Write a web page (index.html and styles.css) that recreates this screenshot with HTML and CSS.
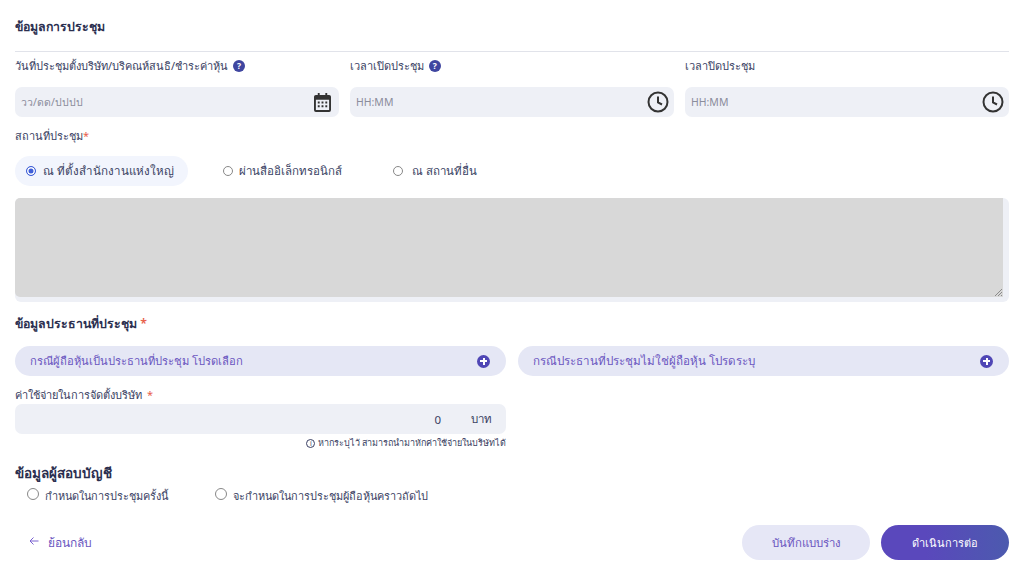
FILE: index.html
```html
<!DOCTYPE html>
<html lang="th">
<head>
<meta charset="utf-8">
<title>ข้อมูลการประชุม</title>
<link rel="stylesheet" href="styles.css">
</head>
<body>
<main class="page">
  <h2 class="title">ข้อมูลการประชุม</h2>
  <div class="rule"></div>
  <div class="three">
    <div class="field">
      <div class="label">วันที่ประชุมตั้งบริษัท/บริคณห์สนธิ/ชำระค่าหุ้น <span class="help">?</span></div>
      <div class="input"><span class="ph">วว/ดด/ปปปป</span>
        <svg class="ico-cal" viewBox="0 0 18 20"><path fill="#333" d="M4 0h2v2h6V0h2v2h2a2 2 0 0 1 2 2v14a2 2 0 0 1-2 2H2a2 2 0 0 1-2-2V4a2 2 0 0 1 2-2h2zM2 7v11h14V7z"/><path fill="#333" d="M4 9h2v2H4zm4 0h2v2H8zm4 0h2v2h-2zM4 13h2v2H4zm4 0h2v2H8zm4 0h2v2h-2z"/></svg>
      </div>
    </div>
    <div class="field">
      <div class="label">เวลาเปิดประชุม <span class="help">?</span></div>
      <div class="input"><span class="ph">HH:MM</span>
        <svg class="ico-clock" viewBox="0 0 22 22"><circle cx="11" cy="11" r="9.5" fill="none" stroke="#333" stroke-width="2"/><path d="M11 5.500V11.500L15 13.500" fill="none" stroke="#333" stroke-width="2"/></svg>
      </div>
    </div>
    <div class="field">
      <div class="label">เวลาปิดประชุม</div>
      <div class="input"><span class="ph">HH:MM</span>
        <svg class="ico-clock" viewBox="0 0 22 22"><circle cx="11" cy="11" r="9.5" fill="none" stroke="#333" stroke-width="2"/><path d="M11 5.500V11.500L15 13.500" fill="none" stroke="#333" stroke-width="2"/></svg>
      </div>
    </div>
  </div>
  <div class="label place">สถานที่ประชุม<span class="req">*</span></div>
  <div class="radios">
    <label class="pill"><span class="radio on"></span>ณ ที่ตั้งสำนักงานแห่งใหญ่</label>
    <label class="opt opt2"><span class="radio"></span>ผ่านสื่ออิเล็กทรอนิกส์</label>
    <label class="opt opt3"><span class="radio"></span>ณ สถานที่อื่น</label>
  </div>
  <div class="area"><div class="gray"><svg class="grip" viewBox="0 0 8 8"><path d="M8 1 1 8M8 4 4 8M8 7 7 8" stroke="#777" stroke-width=".8" fill="none"/></svg></div></div>
  <h3 class="head chair">ข้อมูลประธานที่ประชุม <span class="req">*</span></h3>
  <div class="two">
    <div class="add first"><span>กรณีผู้ถือหุ้นเป็นประธานที่ประชุม โปรดเลือก</span><span class="plus"></span></div>
    <div class="add second"><span>กรณีประธานที่ประชุมไม่ใช่ผู้ถือหุ้น โปรดระบุ</span><span class="plus"></span></div>
  </div>
  <div class="half">
    <div class="label cost">ค่าใช้จ่ายในการจัดตั้งบริษัท <span class="req">*</span></div>
    <div class="input money"><span>0</span><span class="unit">บาท</span></div>
    <div class="note"><span class="info">i</span> หากระบุไว้ สามารถนำมาหักค่าใช้จ่ายในบริษัทได้</div>
  </div>
  <h3 class="head audit">ข้อมูลผู้สอบบัญชี</h3>
  <div class="audit-radios">
    <label class="opt big"><span class="radio"></span>กำหนดในการประชุมครั้งนี้</label>
    <label class="opt big"><span class="radio"></span>จะกำหนดในการประชุมผู้ถือหุ้นคราวถัดไป</label>
  </div>
  <div class="foot">
    <div class="back"><svg viewBox="0 0 10 10"><path d="M9.500 5H1M4.500 1.500 1 5l3.500 3.500" fill="none" stroke="#7a62d0" stroke-width="1"/></svg>ย้อนกลับ</div>
    <div class="btns">
      <button class="btn draft">บันทึกแบบร่าง</button>
      <button class="btn next">ดำเนินการต่อ</button>
    </div>
  </div>
</main>
</body>
</html>
```
FILE: styles.css
```css
* { box-sizing: border-box; }
html, body { margin: 0; background: #fff; }
body { font-family: "Noto Sans", "Inter", "DejaVu Sans", sans-serif; color: #3a3f63; font-size: 11px; overflow: hidden; }
.page { width: 1024px; height: 569px; padding: 0 15px; display: flex; flex-direction: column; }
.title { margin: 0; height: 51px; padding-top: 17px; font-size: 12.300px; line-height: 20px; font-weight: 600; color: #2b2f4f; }
.rule { height: 1px; background: #e1e3ea; flex: none; }
.three { display: grid; grid-template-columns: repeat(3, 324px); gap: 11px; }
.label { height: 20px; line-height: 20px; display: flex; align-items: center; gap: 2px; white-space: pre; }
.three .label { margin-top: 4px; margin-bottom: 11px; }
.input { height: 30px; background: #eef0f6; border-radius: 7px; display: flex; align-items: center; justify-content: space-between; padding: 0 5px 0 6px; }
.ph { color: #8b8d9c; font-size: 10.500px; }
.help { width: 12px; height: 12px; border-radius: 50%; background: #3f46a0; color: #fff; font-size: 8.500px; line-height: 12px; text-align: center; font-weight: 700; }
.ico-cal { width: 17px; height: 19px; margin-right: 3px; }
.ico-clock { width: 22px; height: 22px; }
.place { margin-top: 9px; gap: 0; }
.req { color: #e8604c; }
.radios { display: flex; align-items: center; height: 30px; margin-top: 10px; flex: none; }
.pill { width: 173px; height: 30px; border-radius: 15px; background: #f2f5fd; display: flex; align-items: center; padding-left: 11px; font-size: 11.600px; }
.pill .radio { margin-right: 7px; }
.opt { display: flex; align-items: center; font-size: 11.500px; }
.opt2 { margin-left: 35px; width: 170px; }
.opt3 { width: 120px; }
.opt3 .radio { margin-right: 9px; }
.radio { width: 10px; height: 10px; border-radius: 50%; border: 1px solid #888; background: #fff; margin-right: 6px; flex: none; }
.radio.on { border-color: #3f5fd8; background: #3f5fd8; box-shadow: inset 0 0 0 1.500px #fff; }
.area { margin-top: 12px; height: 104px; background: #eef0f6; border-radius: 6px; padding-right: 6px; flex: none; }
.gray { height: 99px; background: #d8d8d8; border-radius: 5px 0 0 5px; position: relative; }
.grip { position: absolute; right: 1px; bottom: 1px; width: 8px; height: 8px; }
.head { margin: 0; font-size: 13.500px; font-weight: 600; color: #2b2f4f; line-height: 20px; height: 20px; }
.chair { margin-top: 12px; font-size: 12.300px; }
.two { display: grid; grid-template-columns: 491px 491px; gap: 12px; margin-top: 12px; }
.add { height: 30px; border-radius: 15px; background: #e5e7f5; color: #6a55c0; font-size: 11.200px; display: flex; align-items: center; justify-content: space-between; padding: 0 16px 0 15px; }
.add.second { font-size: 11.600px; }
.plus { width: 13px; height: 13px; border-radius: 50%; background: #4f46b5; position: relative; flex: none; }
.plus::before, .plus::after { content: ""; position: absolute; background: #fff; }
.plus::before { left: 3px; right: 3px; top: 5.500px; height: 2px; }
.plus::after { top: 3px; bottom: 3px; left: 5.500px; width: 2px; }
.half { width: 491px; }
.cost { margin-top: 10px; height: 18px; }
.money { height: 30px; padding: 0 14px 0 0; justify-content: flex-end; font-size: 11.500px; }
.unit { margin-left: 30px; }
.note { margin-top: 2px; height: 14px; line-height: 14px; text-align: right; font-size: 9px; }
.info { display: inline-block; width: 9px; height: 9px; border: 1px solid #3a3f63; border-radius: 50%; font-size: 7px; line-height: 7px; text-align: center; }
.audit { margin-top: 13px; }
.audit-radios { display: flex; padding-left: 12px; gap: 47px; height: 24px; margin-top: 1px; align-items: center; }
.big { font-size: 10.900px; }
.big .radio { width: 12px; height: 12px; margin: -4px 6px 0 0; }
.foot { display: flex; justify-content: space-between; align-items: center; margin-top: 17px; height: 35px; flex: none; }
.back { display: flex; align-items: center; gap: 9px; padding-left: 14px; color: #6a55c0; font-size: 12px; }
.back svg { width: 10px; height: 10px; margin-top: -3px; }
.btns { display: flex; gap: 11px; }
.btn { height: 35px; border: 0; border-radius: 18px; font-family: inherit; width: 128px; }
.draft { background: #e6e7f6; color: #6a55c0; font-size: 11.400px; }
.next { background: linear-gradient(90deg, #5a48bc 0%, #5a48bc 35%, #4c5aae 100%); color: #fff; font-weight: 500; font-size: 11px; }
```
